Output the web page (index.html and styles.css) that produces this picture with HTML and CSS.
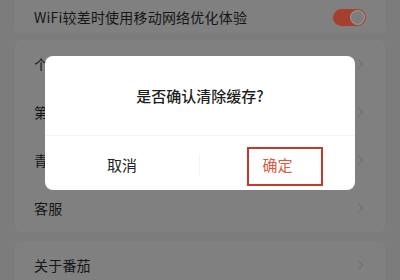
FILE: index.html
```html
<!DOCTYPE html>
<html lang="zh-CN">
<head>
<meta charset="utf-8">
<link rel="stylesheet" href="styles.css">
</head>
<body>
<div class="screen">
  <div class="page">
    <div class="card card-top">
      <div class="row row-short">
        <span class="label">WiFi较差时使用移动网络优化体验</span>
        <span class="toggle"><span class="knob"></span></span>
      </div>
    </div>
    <div class="card card-mid">
      <div class="row"><span class="label">个人信息</span><span class="chev"></span></div>
      <div class="row"><span class="label">第三方信息共享清单</span><span class="chev"></span></div>
      <div class="row"><span class="label">青少年模式</span><span class="chev"></span></div>
      <div class="row"><span class="label">客服</span><span class="chev"></span></div>
    </div>
    <div class="card card-bottom">
      <div class="row"><span class="label">关于番茄</span><span class="chev"></span></div>
    </div>
  </div>

  <div class="overlay">
    <div class="dialog">
      <div class="dialog-title">是否确认清除缓存?</div>
      <div class="dialog-actions">
        <div class="btn btn-cancel">取消</div>
        <div class="btn btn-ok">确定</div>
      </div>
    </div>
    <div class="highlight"></div>
  </div>
</div>
</body>
</html>
```

FILE: styles.css
```css
* { box-sizing: border-box; }

html, body {
  margin: 0;
  padding: 0;
}

body {
  width: 400px;
  height: 280px;
  overflow: hidden;
  font-family: "Noto Sans CJK SC", "Noto Sans", sans-serif;
  background: #7c7c7c;
}

.screen {
  position: relative;
  width: 400px;
  height: 280px;
  overflow: hidden;
}

.page {
  display: flex;
  flex-direction: column;
  padding: 0 15px;
}

.card {
  background: #808080;
  border-radius: 6px;
}

.card-top {
  border-radius: 0 0 6px 6px;
}

.card-mid {
  margin-top: 6px;
}

.card-bottom {
  margin-top: 9px;
}

.row {
  height: 48px;
  display: flex;
  align-items: center;
  justify-content: space-between;
  padding: 0 19px 0 19px;
}

.row-short {
  height: 34px;
}

.label {
  font-size: 14px;
  color: #161616;
  letter-spacing: 0.2px;
}

.toggle {
  width: 33px;
  height: 17px;
  border-radius: 9px;
  background: #a63f2e;
  display: flex;
  align-items: center;
  justify-content: flex-end;
  padding-right: 2px;
}

.knob {
  width: 13px;
  height: 13px;
  border-radius: 50%;
  background: #7e7e7e;
  box-shadow: 0 0 0 1px #9a9a9a;
}

.chev {
  width: 6px;
  height: 6px;
  margin-right: 4px;
  border-top: 1px solid #707070;
  border-right: 1px solid #707070;
  transform: rotate(45deg);
}

.overlay {
  position: absolute;
  inset: 0;
  display: flex;
  justify-content: center;
  align-items: flex-start;
  padding-top: 56px;
}

.dialog {
  width: 310px;
  height: 134px;
  background: #ffffff;
  border-radius: 8px;
  display: flex;
  flex-direction: column;
  overflow: hidden;
}

.dialog-title {
  height: 80px;
  display: flex;
  align-items: center;
  justify-content: center;
  font-size: 15px;
  font-weight: 500;
  color: #1e1e1e;
  border-bottom: 1px solid #f4f4f4;
}

.dialog-actions {
  flex: 1;
  display: grid;
  grid-template-columns: 1fr 1fr;
  align-items: center;
}

.btn {
  text-align: center;
  font-size: 15px;
  line-height: 22px;
  position: relative;
  top: 2px;
}

.btn-cancel {
  color: #222222;
  border-right: 1px solid #f3f3f3;
}

.btn-ok {
  color: #e0563f;
}

.highlight {
  position: absolute;
  left: 247px;
  top: 147px;
  width: 76px;
  height: 39px;
  border: 2px solid #c5392b;
}
```
